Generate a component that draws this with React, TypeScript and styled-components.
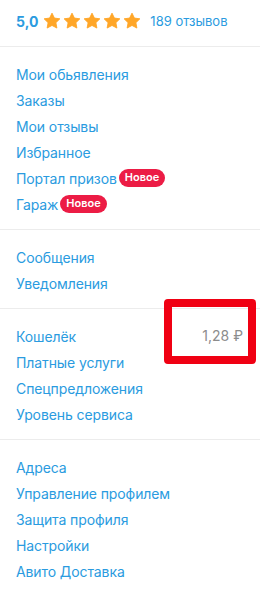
import styled, { createGlobalStyle } from 'styled-components'

const Global = createGlobalStyle`
  html, body {
    margin: 0;
    padding: 0;
    background: #ffffff;
  }
  body {
    font-family: Inter, "Noto Sans", sans-serif;
  }
`;

const Page = styled.div`
  width: 260px;
  display: flex;
  flex-direction: column;
`;

const Rating = styled.div`
  display: flex;
  align-items: center;
  height: 40px;
  padding: 1px 16px 5px;
  border-bottom: 1px solid #ececec;
`;

const Score = styled.span`
  font-size: 14px;
  font-weight: 700;
  color: #2a9be0;
  margin-right: 5px;
`;

const Stars = styled.div`
  display: flex;
  gap: 2px;
  margin-right: 9px;
`;

const Reviews = styled.span`
  font-size: 13px;
  color: #2a9be0;
`;

const Section = styled.div<{ $last?: boolean }>`
  display: flex;
  flex-direction: column;
  padding: 14px 0 12px;
  border-bottom: ${p => (p.$last ? 'none' : '1px solid #ececec')};
`;

const Row = styled.div`
  display: flex;
  align-items: center;
  height: 26px;
  padding: 0 16px;
  gap: 2px;
`;

const Link = styled.a`
  font-size: 14px;
  color: #2a9be0;
  text-decoration: none;
  letter-spacing: -0.1px;
`;

const Badge = styled.span`
  font-size: 11px;
  font-weight: 600;
  color: #ffffff;
  background: #ec1c45;
  border-radius: 9px;
  padding: 2px 6px 3px;
  line-height: 13px;
`;

const Amount = styled.span`
  margin-left: auto;
  font-size: 14px;
  line-height: 18px;
  color: #8c8c8c;
  position: relative;
  padding-right: 1px;
`;

const Highlight = styled.span`
  position: absolute;
  right: -12px;
  top: -28px;
  width: 92px;
  height: 65px;
  box-sizing: border-box;
  border: 8px solid #f00013;
  border-radius: 4px;
`;

function Star() {
  return (
    <svg width="18" height="18" viewBox="0 0 24 24">
      <path
        d="M12 1.5l3.2 6.6 7.3 1-5.3 5.1 1.3 7.2L12 17.9l-6.5 3.5 1.3-7.2-5.3-5.1 7.3-1z"
        fill="#ffa628"
        stroke="#ffa628"
        strokeWidth="1.2"
        strokeLinejoin="round"
      />
    </svg>
  );
}

const sections: { label: string; badge?: boolean; amount?: string }[][] = [
  [
    { label: 'Мои обьявления' },
    { label: 'Заказы' },
    { label: 'Мои отзывы' },
    { label: 'Избранное' },
    { label: 'Портал призов', badge: true },
    { label: 'Гараж', badge: true },
  ],
  [{ label: 'Сообщения' }, { label: 'Уведомления' }],
  [
    { label: 'Кошелёк', amount: '1,28 ₽' },
    { label: 'Платные услуги' },
    { label: 'Спецпредложения' },
    { label: 'Уровень сервиса' },
  ],
  [
    { label: 'Адреса' },
    { label: 'Управление профилем' },
    { label: 'Защита профиля' },
    { label: 'Настройки' },
    { label: 'Авито Доставка' },
  ],
];

export default function App() {
  return (
    <Page>
      <Global />
      <Rating>
        <Score>5,0</Score>
        <Stars>
          {[0, 1, 2, 3, 4].map(i => <Star key={i} />)}
        </Stars>
        <Reviews>189 отзывов</Reviews>
      </Rating>
      {sections.map((items, i) => (
        <Section key={i} $last={i === sections.length - 1}>
          {items.map(item => (
            <Row key={item.label}>
              <Link>{item.label}</Link>
              {item.badge && <Badge>Новое</Badge>}
              {item.amount && (
                <Amount>
                  {item.amount}
                  <Highlight />
                </Amount>
              )}
            </Row>
          ))}
        </Section>
      ))}
    </Page>
  )
}
